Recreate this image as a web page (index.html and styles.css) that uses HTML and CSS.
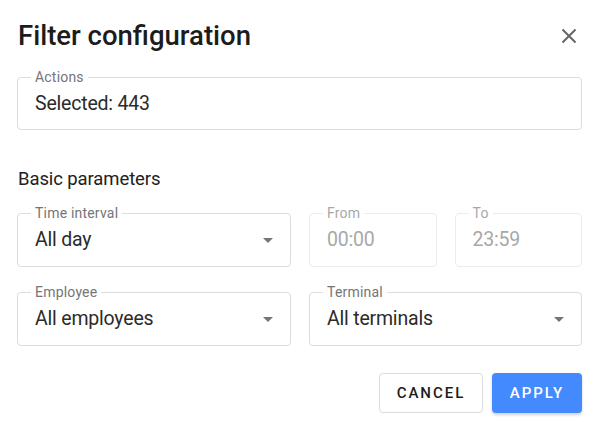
FILE: index.html
```html
<!DOCTYPE html>
<html>
<head>
<meta charset="utf-8">
<link rel="stylesheet" href="styles.css">
</head>
<body>
<div class="dialog">
  <div class="header">
    <h1 class="title">Filter configuration</h1>
    <button class="close" aria-label="Close">
      <svg width="16" height="16" viewBox="0 0 16 16"><path d="M1.5 1.5 L14.5 14.5 M14.5 1.5 L1.5 14.5" stroke="#666" stroke-width="2" fill="none"/></svg>
    </button>
  </div>

  <div class="field field-actions">
    <span class="label">Actions</span>
    <span class="value">Selected: 443</span>
  </div>

  <div class="section">Basic parameters</div>

  <div class="row row-three">
    <div class="field">
      <span class="label">Time interval</span>
      <span class="value">All day</span>
      <span class="arrow"></span>
    </div>
    <div class="field disabled">
      <span class="label">From</span>
      <span class="value">00:00</span>
    </div>
    <div class="field disabled">
      <span class="label">To</span>
      <span class="value">23:59</span>
    </div>
  </div>

  <div class="row row-two">
    <div class="field">
      <span class="label">Employee</span>
      <span class="value">All employees</span>
      <span class="arrow"></span>
    </div>
    <div class="field">
      <span class="label">Terminal</span>
      <span class="value">All terminals</span>
      <span class="arrow"></span>
    </div>
  </div>

  <div class="actions">
    <button class="btn btn-cancel">Cancel</button>
    <button class="btn btn-apply">Apply</button>
  </div>
</div>
</body>
</html>
```

FILE: styles.css
```css
* { box-sizing: border-box; }
html, body { margin: 0; background: #fff; }
body {
  font-family: Roboto, "Liberation Sans", sans-serif;
  color: #212121;
  width: 595px;
  height: 430px;
  overflow: hidden;
}
.dialog {
  padding: 18px 13px 0 17px;
  display: flex;
  flex-direction: column;
}
.header {
  display: flex;
  align-items: center;
  justify-content: space-between;
  height: 36px;
  margin-bottom: 23px;
}
.title {
  margin: 0 0 0 1px;
  font-size: 27.5px;
  line-height: 36px;
  font-weight: 500;
  color: #1c1c1c;
}
.close {
  border: 0;
  background: none;
  padding: 0;
  width: 16px;
  height: 16px;
  margin-right: 5px;
  display: flex;
}
.field {
  position: relative;
  height: 54px;
  border: 1px solid #dcdcdc;
  border-radius: 4px;
  display: flex;
  align-items: center;
  padding: 0 17px;
}
.field-actions { height: 53px; }
.label {
  position: absolute;
  top: -9px;
  left: 13px;
  padding: 0 4px;
  background: #fff;
  font-size: 14px;
  line-height: 16px;
  letter-spacing: 0.2px;
  color: #757575;
}
.value {
  font-size: 19.5px;
  line-height: 24px;
  letter-spacing: -0.2px;
  color: #2b2b2b;
  flex: 1;
}
.disabled { border-color: #ececec; }
.disabled .label, .disabled .value { color: #a8a8a8; }
.arrow {
  width: 0;
  height: 0;
  border-left: 5px solid transparent;
  border-right: 5px solid transparent;
  border-top: 5px solid #757575;
}
.section {
  margin-top: 36px;
  font-size: 18.5px;
  line-height: 26px;
  letter-spacing: -0.1px;
  margin-left: 1px;
  margin-bottom: 21px;
}
.row { display: grid; column-gap: 18px; }
.row-three { grid-template-columns: 274px 1fr 1fr; }
.row-two { grid-template-columns: 274px 1fr; margin-top: 25px; }
.actions {
  display: flex;
  justify-content: flex-end;
  gap: 9px;
  margin-top: 27px;
}
.btn {
  font-family: Roboto, "Liberation Sans", sans-serif;
  font-size: 15px;
  font-weight: 500;
  text-transform: uppercase;
  letter-spacing: 2px;
  height: 40px;
  border-radius: 4px;
  cursor: pointer;
}
.btn-cancel {
  width: 104px;
  background: #fff;
  border: 1px solid #dcdcdc;
  color: #1c1c1c;
}
.btn-apply {
  width: 90px;
  background: #448aff;
  border: 0;
  color: #fff;
  box-shadow: 0 2px 3px rgba(0,0,0,0.18);
}
```
